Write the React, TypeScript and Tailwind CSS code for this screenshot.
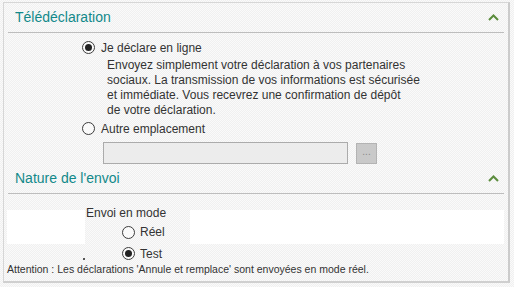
import React from 'react';

function Radio({ checked }: { checked?: boolean }) {
  return (
    <span className="w-[13px] h-[13px] rounded-full border border-[#3c3c3c] bg-[#fafafa] flex items-center justify-center shrink-0">
      {checked && <span className="w-[7px] h-[7px] rounded-full bg-[#222]" />}
    </span>
  );
}

function Chevron() {
  return (
    <svg width="11" height="7" viewBox="0 0 11 7" className="shrink-0">
      <path d="M1 6 L5.5 1.5 L10 6" fill="none" stroke="#5b8c3c" strokeWidth="2" />
    </svg>
  );
}

function SectionHeader({ title }: { title: string }) {
  return (
    <div className="h-[30px] shrink-0 flex items-center justify-between border-b border-[#bdbdbd] pl-[7px] pr-[5px]">
      <span className="text-[14px] text-[#12898a]">{title}</span>
      <Chevron />
    </div>
  );
}

export default function App() {
  return (
    <div
      className="w-[514px] h-[287px] pl-[3px] pt-[2px] pr-[4px] pb-[4px] bg-[repeating-conic-gradient(#f0f0f0_0_25%,#fafafa_0_50%)] bg-[length:2px_2px] text-[#333] text-[12px]"
      style={{ fontFamily: '"Liberation Sans", Arial, sans-serif' }}
    >
      <div className="h-full border-t border-l border-[#d6d6d6] border-r-2 border-r-[#cbcbcb] border-b-2 border-b-[#cfcfcf] px-[4px] flex flex-col">
        <SectionHeader title="Télédéclaration" />

        <div className="flex items-center gap-[6px] ml-[74px] mt-[7px] h-[15px] shrink-0">
          <Radio checked />
          <span>Je déclare en ligne</span>
        </div>
        <div className="ml-[99px] mt-[3px] leading-[15px] whitespace-nowrap shrink-0">
          <p>Envoyez simplement votre déclaration à vos partenaires</p>
          <p>sociaux. La transmission de vos informations est sécurisée</p>
          <p>et immédiate. Vous recevrez une confirmation de dépôt</p>
          <p>de votre déclaration.</p>
        </div>
        <div className="flex items-center gap-[6px] ml-[74px] mt-[3px] h-[15px] shrink-0">
          <Radio />
          <span>Autre emplacement</span>
        </div>
        <div className="flex items-center gap-[8px] ml-[95px] mt-[6px] shrink-0">
          <div className="w-[245px] h-[22px] bg-[#ececec] border border-[#ababab]" />
          <button className="w-[21px] h-[21px] bg-[#c9c9c9] border border-[#b3b3b3] text-[#8a8a8a] text-[10px] leading-none pb-[2px]">
            ...
          </button>
        </div>

        <SectionHeader title="Nature de l'envoi" />

        <div className="flex items-start mt-[12px] shrink-0">
          <div className="w-[78px] h-[34px] bg-white mt-[4px] -ml-[1px]" />
          <div className="w-[105px] leading-[15px]">
            <div className="pl-[1px]">Envoi en mode</div>
            <div className="flex items-center gap-[5px] ml-[37px] mt-[4px] h-[15px]">
              <Radio />
              <span>Réel</span>
            </div>
          </div>
          <div className="flex-1 h-[34px] bg-white mt-[4px]" />
        </div>
        <div className="flex items-center h-[15px] mt-[2px] shrink-0">
          <span className="w-[2px] h-[2px] bg-[#555] ml-[75px] mt-[10px]" />
          <div className="flex items-center gap-[5px] ml-[37px]">
            <Radio checked />
            <span>Test</span>
          </div>
        </div>
        <div className="-ml-[1px] text-[10.5px] leading-[15px] mt-[1px] whitespace-nowrap shrink-0">
          Attention : Les déclarations 'Annule et remplace' sont envoyées en mode réel.
        </div>
      </div>
    </div>
  );
}
